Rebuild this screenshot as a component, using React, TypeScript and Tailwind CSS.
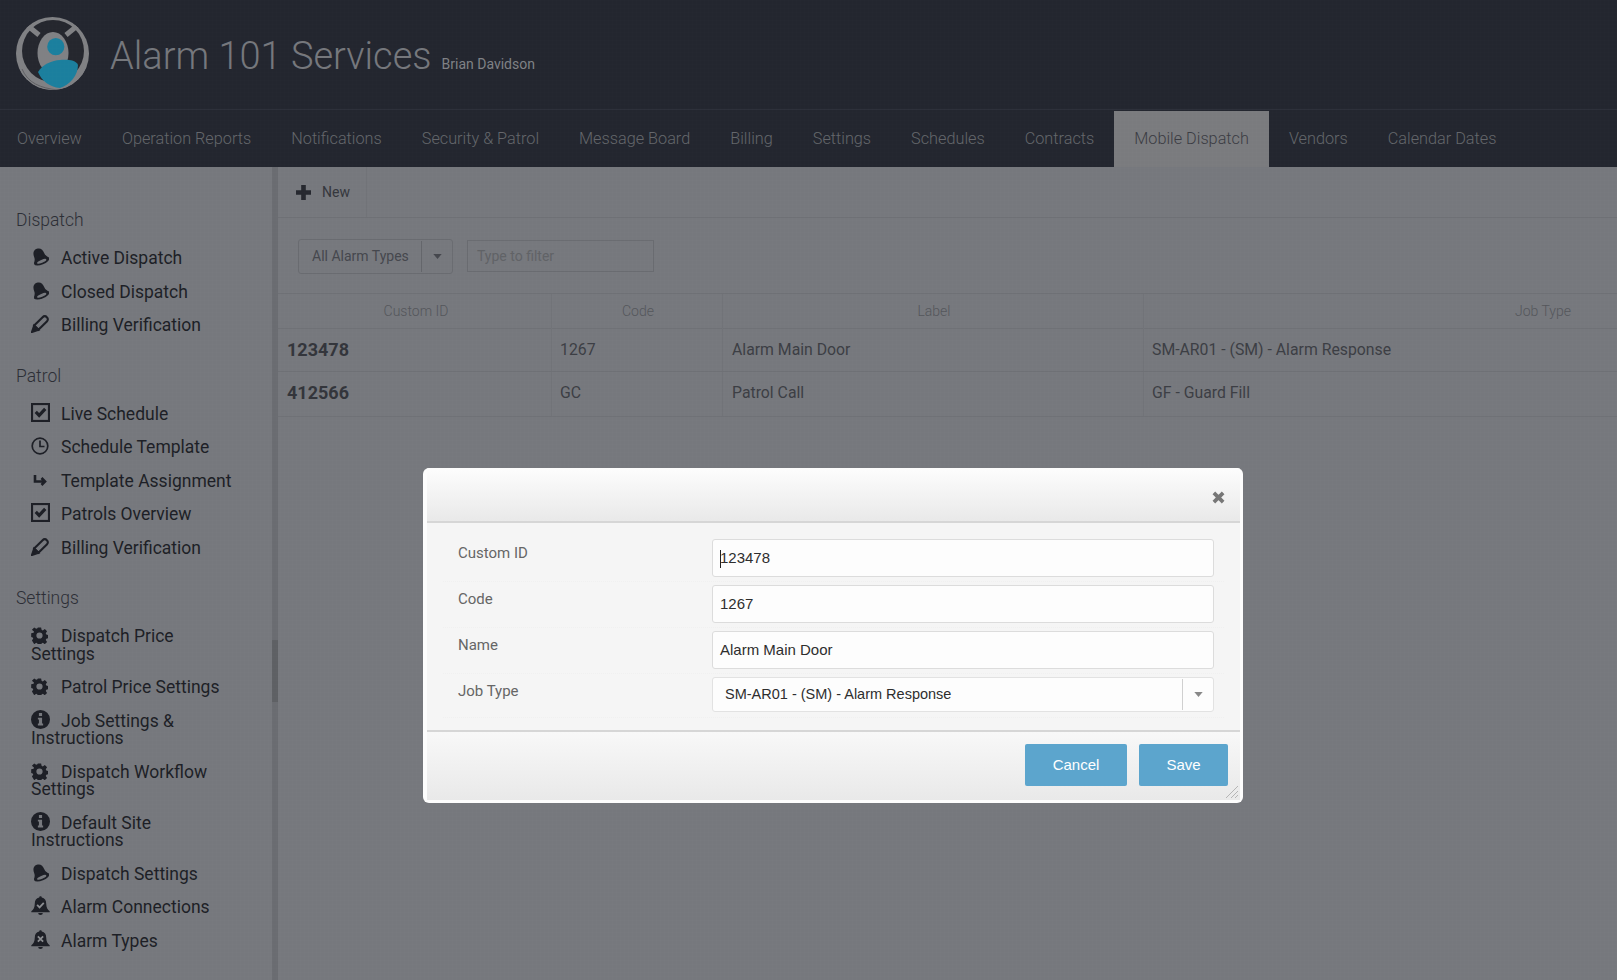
const tabs = [
  "Overview",
  "Operation Reports",
  "Notifications",
  "Security & Patrol",
  "Message Board",
  "Billing",
  "Settings",
  "Schedules",
  "Contracts",
  "Mobile Dispatch",
  "Vendors",
  "Calendar Dates",
];

const TiltedBell = () => (
  <svg viewBox="0 0 16 16" className="w-[18px] h-[18px] fill-[#1d1f26]">
    <g transform="rotate(-22 8 8)">
      <path d="M8 .2C4.600.2 3.200 2.800 3.200 6c0 3-1.700 4-2.200 5.600h14C14.500 10 12.800 9 12.800 6 12.800 2.800 11.400.2 8 .2z" />
      <ellipse cx="8" cy="12" rx="7.200" ry="3" />
      <ellipse cx="8" cy="12.100" rx="4.400" ry="1.300" fill="#76787d" />
    </g>
  </svg>
);

const Pencil = () => (
  <svg viewBox="0 0 18 18" className="w-[19px] h-[19px] fill-none stroke-[#1d1f26] stroke-[2]">
    <path d="M3 11L11 3C12.300 1.700 13.800 1.700 15 3 16.300 4.200 16.300 5.700 15 7L7 15z" />
    <path d="M1 17L3 11 7 15z" className="fill-[#1d1f26]" />
  </svg>
);

const CheckSquare = () => (
  <svg viewBox="0 0 18 18" className="w-[19px] h-[19px] fill-none stroke-[#1d1f26]">
    <rect x="1" y="1" width="16" height="16" strokeWidth="2" />
    <path d="M4.500 8.500l3.200 3.200 5.800-6.200" strokeWidth="3" />
  </svg>
);

const Clock = () => (
  <svg viewBox="0 0 18 18" className="w-[18px] h-[18px] fill-none stroke-[#1d1f26] stroke-[1.700]">
    <circle cx="9" cy="9" r="7.800" />
    <path d="M9 3.500V9.500H13.500" />
  </svg>
);

const ArrowTurn = () => (
  <svg viewBox="0 0 18 18" className="w-[18px] h-[18px] fill-none stroke-[#1d1f26] stroke-[2.600]">
    <path d="M4 4v6.500h10M10.500 7l3.500 3.500-3.500 3.500" />
  </svg>
);

const BellMark = ({ cross }: { cross?: boolean }) => (
  <svg viewBox="0 0 18 18" className="w-[19px] h-[19px] fill-[#1d1f26]">
    <path d="M9 .3c-.7 0-1.200.5-1.200 1.200C5 2.100 3.600 4.300 3.600 7c0 4-1.500 6-3.300 7.500v1h17.400v-1C15.900 13 14.400 11 14.400 7c0-2.700-1.400-4.900-4.200-5.500C10.200.8 9.700.3 9 .3zM6.800 16.200a2.200 1.800 0 0 0 4.400 0z" />
    {cross ? (
      <path d="M6.500 6l5 5M11.500 6l-5 5" className="fill-none stroke-[#8b8d91] stroke-[1.700]" />
    ) : (
      <path d="M5.800 8.500l2.300 2.300 4-4.300" className="fill-none stroke-[#8b8d91] stroke-[1.700]" />
    )}
  </svg>
);

const Gear = () => (
  <svg viewBox="0 0 18 18" className="w-[17px] h-[17px] fill-[#1d1f26]">
    <path
      fillRule="evenodd"
      d="M7.300.5h3.400l.5 2.500 1.300.6 2.100-1.400 2.400 2.400-1.400 2.100.6 1.300 2.500.5v3.400l-2.500.5-.6 1.300 1.400 2.100-2.400 2.400-2.100-1.400-1.300.6-.5 1.600H7.300l-.5-1.600-1.300-.6-2.100 1.400L1 14.400l1.400-2.100-.6-1.300-1.600-.5V6.700l2.500-.5.600-1.300L1 2.800 3.400.4l2.100 1.400 1.300-.6zM9 5.700a3.300 3.300 0 1 0 0 6.600 3.300 3.300 0 0 0 0-6.600z"
    />
  </svg>
);

const Info = () => (
  <svg viewBox="0 0 18 18" className="w-[19px] h-[19px] fill-[#1d1f26]">
    <path
      fillRule="evenodd"
      d="M9 0a9 9 0 1 1 0 18A9 9 0 0 1 9 0zM7.500 2.800v2.800h3V2.800zM6.500 7.300v1.800h1v3.600h-1v2h5v-2h-1V7.300z"
    />
  </svg>
);

const Plus = () => (
  <svg viewBox="0 0 15 15" className="w-[15px] h-[15px] fill-[#26282f]">
    <path d="M5.200 0h4.600v5.200H15v4.600H9.800V15H5.200V9.800H0V5.200h5.200z" />
  </svg>
);

const Times = () => (
  <svg viewBox="0 0 14 14" className="w-[13px] h-[13px] fill-none stroke-[#777] stroke-[4]">
    <path d="M2 2l10 10M12 2L2 12" />
  </svg>
);

const sections = [
  {
    title: "Dispatch",
    items: [
      { label: "Active Dispatch", icon: <TiltedBell /> },
      { label: "Closed Dispatch", icon: <TiltedBell /> },
      { label: "Billing Verification", icon: <Pencil /> },
    ],
  },
  {
    title: "Patrol",
    items: [
      { label: "Live Schedule", icon: <CheckSquare /> },
      { label: "Schedule Template", icon: <Clock /> },
      { label: "Template Assignment", icon: <ArrowTurn /> },
      { label: "Patrols Overview", icon: <CheckSquare /> },
      { label: "Billing Verification", icon: <Pencil /> },
    ],
  },
  {
    title: "Settings",
    items: [
      { label: "Dispatch Price Settings", icon: <Gear /> },
      { label: "Patrol Price Settings", icon: <Gear /> },
      { label: "Job Settings & Instructions", icon: <Info /> },
      { label: "Dispatch Workflow Settings", icon: <Gear /> },
      { label: "Default Site Instructions", icon: <Info /> },
      { label: "Dispatch Settings", icon: <TiltedBell /> },
      { label: "Alarm Connections", icon: <BellMark /> },
      { label: "Alarm Types", icon: <BellMark cross /> },
    ],
  },
];

const rows = [
  { id: "123478", code: "1267", label: "Alarm Main Door", job: "SM-AR01 - (SM) - Alarm Response" },
  { id: "412566", code: "GC", label: "Patrol Call", job: "GF - Guard Fill" },
];

const Caret = ({ className }: { className: string }) => (
  <svg viewBox="0 0 10 6" className={`w-[9px] h-[5px] ${className}`}>
    <path d="M0 0h10L5 6z" />
  </svg>
);

const Logo = () => (
  <svg viewBox="0 0 73 73" className="w-[73px] h-[73px] shrink-0">
    <clipPath id="logo-disc">
      <circle cx="36.500" cy="36.500" r="36.500" />
    </clipPath>
    <g clipPath="url(#logo-disc)">
      <rect width="73" height="73" fill="#808184" />
      <circle cx="37" cy="34" r="31" fill="#25272e" />
      <path d="M12 9l11 9M61 9L50 18" stroke="#808184" strokeWidth="5" />
      <ellipse cx="37" cy="36" rx="15.500" ry="21" fill="#808184" />
      <path d="M4 46C12 62 26 68 44 71 54 68 62 60 69 42L76 76H0z" fill="#808184" />
      <path d="M6 52C12 66 24 71 42 73" fill="none" stroke="#55575b" strokeWidth=".8" />
      <circle cx="39.800" cy="29.700" r="8.600" fill="#1b7f9e" />
      <path d="M22 55C27 47 36 43.500 44 43 52 42.500 60 43 62 48 62 58 54 68 44 71 33 70 26 64 22 55z" fill="#1b7f9e" />
    </g>
  </svg>
);

const Sidebar = () => (
  <aside className="w-[272px] shrink-0 pt-5 pr-[35px] text-[#1d1f26]">
    {sections.map((section) => (
      <div key={section.title} className="mt-5">
        <h3 className="h-[26px] pl-4 text-[17.5px] leading-[26px] font-light text-[#2c2e35] mb-[9px]">{section.title}</h3>
        <ul>
          {section.items.map((item, i) => (
            <li key={i} className="pl-[31px] py-2 text-[17.5px] leading-[17.5px]">
              <span className="relative inline-block w-[30px] h-0">
                <span className="absolute left-0 -bottom-[2px]">{item.icon}</span>
              </span>
              {item.label}
            </li>
          ))}
        </ul>
      </div>
    ))}
  </aside>
);

const FieldRow = ({ label, children, last }: { label: string; children: React.ReactNode; last?: boolean }) => (
  <div className={`flex items-start mx-4 pr-[10px] border-b border-dotted border-[#f0f0f0] ${last ? "pb-[5px]" : "pb-1 mb-[3px]"}`}>
    <label className="w-[269px] pl-[15px] pt-1 text-[15px] leading-[20px] text-[#666]">{label}</label>
    {children}
  </div>
);

const inputClass =
  "flex-1 h-[38px] bg-[#fdfdfd] border border-[#dcdcdc] rounded-[3px] pl-[7px] text-[15px] leading-[36px] text-[#2e2e2e] font-['Liberation_Sans',sans-serif]";

const Modal = () => (
  <div className="absolute left-[423px] top-[468px] w-[820px] h-[335px] bg-[#fdfdfd] rounded-[6px] pl-1 pr-[3px] pb-[3px] flex flex-col overflow-hidden">
    <div className="h-[55px] shrink-0 bg-gradient-to-b from-[#fdfdfd] to-[#e9e9e9] border-b-2 border-[#d6d6d6] flex justify-end items-center pr-[15px] pt-[6px]">
      <Times />
    </div>
    <div className="bg-[#f5f5f5] pt-4 shrink-0 h-[207px]">
      <FieldRow label="Custom ID">
        <div className={`${inputClass} relative`}>
          <span className="absolute left-[7px] top-[10px] w-px h-[18px] bg-[#222]" />
          123478
        </div>
      </FieldRow>
      <FieldRow label="Code">
        <div className={inputClass}>1267</div>
      </FieldRow>
      <FieldRow label="Name">
        <div className={inputClass}>Alarm Main Door</div>
      </FieldRow>
      <FieldRow label="Job Type" last>
        <div className="flex-1 h-[35px] bg-[#fdfdfd] border border-[#e2e2e2] rounded-[3px] flex items-center text-[14.5px] text-[#2e2e2e] font-['Liberation_Sans',sans-serif]">
          <span className="flex-1 pl-3 leading-[33px]">SM-AR01 - (SM) - Alarm Response</span>
          <span className="w-[31px] h-[31px] border-l border-[#d0d0d0] flex items-center justify-center">
            <Caret className="fill-[#888]" />
          </span>
        </div>
      </FieldRow>
    </div>
    <div className="flex-1 bg-gradient-to-b from-[#f8f8f8] to-[#e9e9e9] border-t-2 border-[#d6d6d6] relative flex justify-end items-start gap-3 pr-[12px] pt-3 text-[15px] text-white font-['Liberation_Sans',sans-serif]">
      <button className="w-[102px] h-[42px] bg-[#5ca5cd] rounded-[2px]">Cancel</button>
      <button className="w-[89px] h-[42px] bg-[#5ca5cd] rounded-[2px]">Save</button>
      <svg viewBox="0 0 14 14" className="absolute right-[1px] bottom-[1px] w-[14px] h-[14px] stroke-[#b5b5b5]">
        <path d="M1 13L13 1M6 13l7-7M10 13l3-3" />
      </svg>
    </div>
  </div>
);

export default function App() {
  return (
    <div className="relative w-[1617px] h-[980px] overflow-hidden bg-[#76787d] font-['Roboto',sans-serif]">
      <header className="bg-[#23262f] h-[167px]">
        <div className="h-[110px] pl-4 pt-[17px] flex items-start border-b border-[#2d303a]">
          <Logo />
          <h1 className="ml-[21px] mt-[17px] text-[38px] leading-[44px] font-light text-[#75777c] whitespace-nowrap">Alarm 101 Services</h1>
          <span className="ml-[10px] mt-[38px] text-[14px] leading-[18px] text-[#7f8185]">Brian Davidson</span>
        </div>
        <nav className="flex -ml-[3px] h-[56px] mt-px">
          {tabs.map((tab) => (
            <a
              key={tab}
              className={`px-5 text-[16.25px] leading-[56px] font-light whitespace-nowrap ${
                tab === "Mobile Dispatch" ? "bg-[#7a7b7e] text-[#3a3c43]" : "text-[#64666b]"
              }`}
            >
              {tab}
            </a>
          ))}
        </nav>
      </header>

      <div className="flex h-[813px]">
        <Sidebar />
        <div className="w-[6px] shrink-0 bg-[#6a6c71] pt-[473px]">
          <div className="h-[62px] bg-[#5e6064]" />
        </div>
        <main className="flex-1 min-w-0">
          <div className="h-[51px] border-b border-[#6e7075]">
            <div className="w-[89px] h-full border-r border-[#717378] flex items-center pl-[18px] gap-[11px] text-[14px] text-[#34363c]">
              <Plus />
              New
            </div>
          </div>
          <div className="flex items-start gap-[14px] pl-5 pt-[21px] h-[75px]">
            <div className="w-[155px] h-[35px] border border-[#696b70] rounded-[3px] flex items-center text-[14px] text-[#45474d]">
              <span className="w-[123px] pl-[13px] border-r border-[#64666b] h-[31px] whitespace-nowrap leading-[31px]">All Alarm Types</span>
              <span className="flex-1 flex justify-center">
                <Caret className="fill-[#45474d]" />
              </span>
            </div>
            <div className="w-[187px] h-[32px] mt-px border border-[#696b70] pl-[9px] text-[14px] leading-[31px] text-[#606266]">Type to filter</div>
          </div>
          <div className="border-t border-[#6e7075]">
            <div className="grid grid-cols-[274px_171px_421px_1fr] h-[35px] text-[14px] font-light text-[#54565b] leading-[35px] border-b border-[#6e7075]">
              <div className="text-center pl-[3px] border-r border-[#717378]">Custom ID</div>
              <div className="text-center pl-[2px] border-r border-[#717378]">Code</div>
              <div className="text-center pl-[2px] border-r border-[#717378]">Label</div>
              <div className="text-right pr-[46px]">Job Type</div>
            </div>
            {rows.map((row, i) => (
              <div
                key={row.id}
                className={`grid grid-cols-[274px_171px_421px_1fr] border-b border-[#6e7075] text-[15.8px] text-[#3c3e44] ${i === 0 ? "h-[43px] leading-[42px]" : "h-[45px] leading-[42px]"}`}
              >
                <div className="pl-[9px] text-[18px] font-bold border-r border-[#717378] text-[#33353b]">{row.id}</div>
                <div className="pl-2 border-r border-[#717378]">{row.code}</div>
                <div className="pl-[9px] border-r border-[#717378]">{row.label}</div>
                <div className="pl-2">{row.job}</div>
              </div>
            ))}
          </div>
        </main>
      </div>

      {/* backdrop texture under the dialog */}
      <div className="absolute inset-0 pointer-events-none bg-[linear-gradient(rgba(255,255,255,0.005)_1px,transparent_1px),linear-gradient(90deg,rgba(255,255,255,0.005)_1px,transparent_1px)] bg-[size:4px_4px]" />
      <Modal />
    </div>
  );
}
